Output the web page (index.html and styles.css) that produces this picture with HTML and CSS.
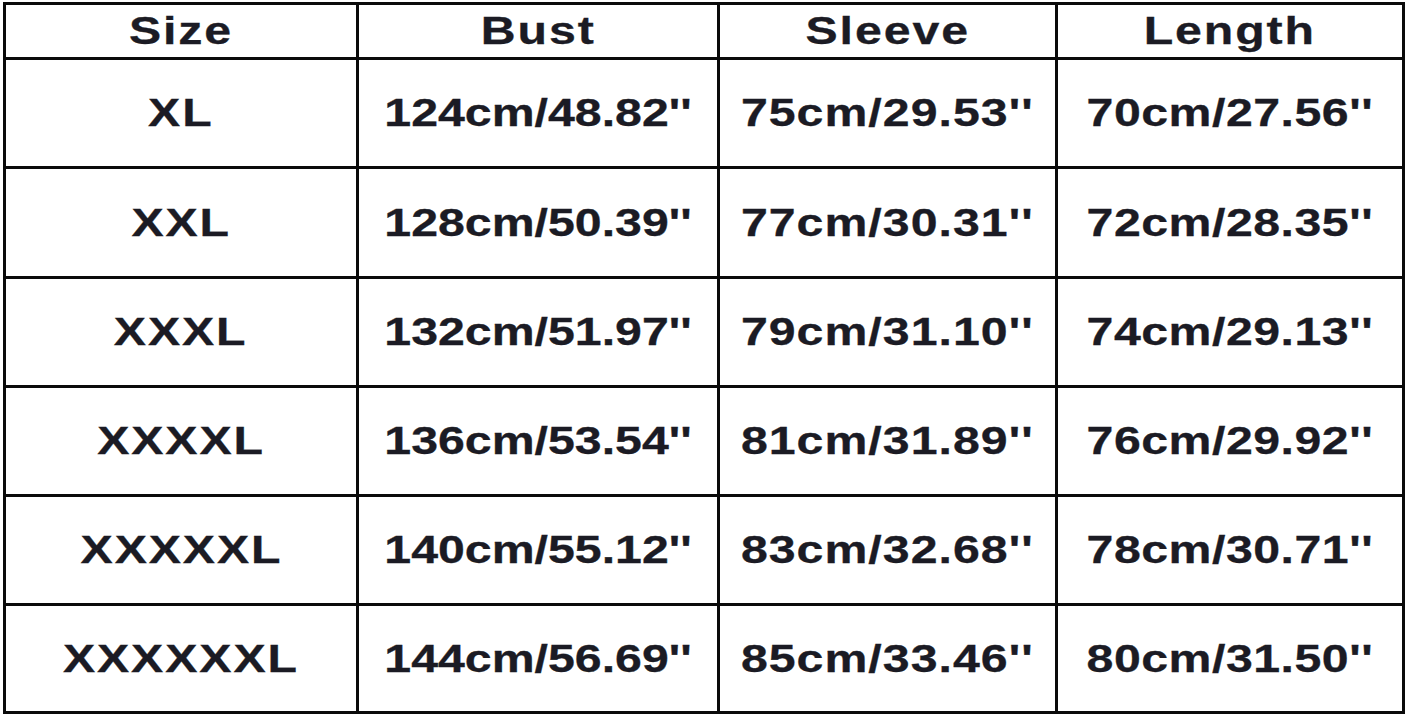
FILE: index.html
```html
<!DOCTYPE html>
<html>
<head>
<meta charset="utf-8">
<link rel="stylesheet" href="styles.css">
</head>
<body>
<div class="page">
  <div class="chart">
    <div class="cell head"><span class="t">Size</span></div>
    <div class="cell head"><span class="t">Bust</span></div>
    <div class="cell head"><span class="t">Sleeve</span></div>
    <div class="cell head"><span class="t">Length</span></div>

    <div class="cell size"><span class="t">XL</span></div>
    <div class="cell"><span class="t">124cm/48.82''</span></div>
    <div class="cell sleeve"><span class="t">75cm/29.53''</span></div>
    <div class="cell length"><span class="t">70cm/27.56''</span></div>

    <div class="cell size"><span class="t">XXL</span></div>
    <div class="cell"><span class="t">128cm/50.39''</span></div>
    <div class="cell sleeve"><span class="t">77cm/30.31''</span></div>
    <div class="cell length"><span class="t">72cm/28.35''</span></div>

    <div class="cell size"><span class="t">XXXL</span></div>
    <div class="cell"><span class="t">132cm/51.97''</span></div>
    <div class="cell sleeve"><span class="t">79cm/31.10''</span></div>
    <div class="cell length"><span class="t">74cm/29.13''</span></div>

    <div class="cell size"><span class="t">XXXXL</span></div>
    <div class="cell"><span class="t">136cm/53.54''</span></div>
    <div class="cell sleeve"><span class="t">81cm/31.89''</span></div>
    <div class="cell length"><span class="t">76cm/29.92''</span></div>

    <div class="cell size"><span class="t">XXXXXL</span></div>
    <div class="cell"><span class="t">140cm/55.12''</span></div>
    <div class="cell sleeve"><span class="t">83cm/32.68''</span></div>
    <div class="cell length"><span class="t">78cm/30.71''</span></div>

    <div class="cell size"><span class="t">XXXXXXL</span></div>
    <div class="cell"><span class="t">144cm/56.69''</span></div>
    <div class="cell sleeve"><span class="t">85cm/33.46''</span></div>
    <div class="cell length"><span class="t">80cm/31.50''</span></div>
  </div>
</div>
</body>
</html>
```

FILE: styles.css
```css
html, body {
  margin: 0;
  padding: 0;
  background: #ffffff;
}

.page {
  padding: 2px 0 0 3px;
}

.chart {
  display: grid;
  width: 1402px;
  box-sizing: border-box;
  grid-template-columns: 350px 358px 335px 344px;
  grid-template-rows: 52px 106px 107px 106px 106px 106px 105px;
  gap: 3px;
  padding: 3px;
  background: #0a0a0a;
}

.cell {
  background: #ffffff;
  display: flex;
  align-items: center;
  justify-content: center;
  overflow: hidden;
}

.t {
  display: inline-block;
  font-family: "Liberation Sans", Arial, sans-serif;
  font-weight: bold;
  font-size: 38px;
  line-height: 1;
  color: #1b1b24;
  white-space: nowrap;
  transform: scaleX(1.27);
  -webkit-text-stroke: 0.3px #1b1b24;
}

.head .t,
.size .t {
  letter-spacing: 1.5px;
}

.sleeve .t {
  letter-spacing: 0.8px;
}

.length .t {
  letter-spacing: 0.4px;
}
```
